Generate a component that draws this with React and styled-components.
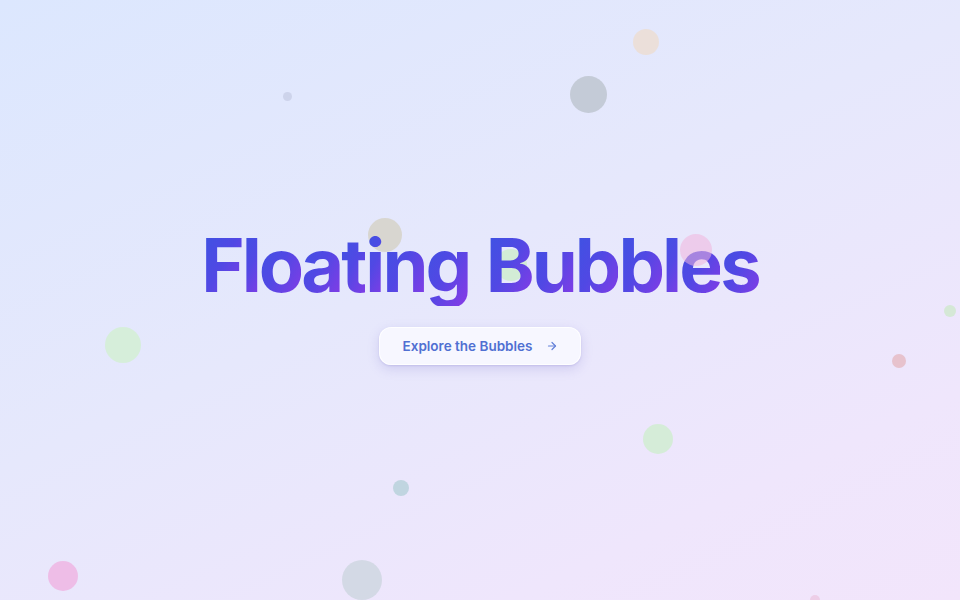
import React from "react";
import styled, { createGlobalStyle } from "styled-components";

const GlobalStyle = createGlobalStyle`
  html, body {
    margin: 0;
    padding: 0;
  }
  body {
    font-family: Inter, "Noto Sans", "Liberation Sans", sans-serif;
    -webkit-font-smoothing: antialiased;
  }
`;

const Stage = styled.main`
  position: relative;
  width: 100vw;
  height: 100vh;
  min-height: 600px;
  overflow: hidden;
  background: linear-gradient(155deg, #dce7fe 0%, #e6e8fc 45%, #efe6fc 80%, #f2e5fb 100%);
`;

const Hero = styled.section`
  position: relative;
  z-index: 2;
  height: 100%;
  box-sizing: border-box;
  padding-bottom: 12px;
  display: flex;
  flex-direction: column;
  align-items: center;
  justify-content: center;
  gap: 21px;
`;

const Title = styled.h1`
  margin: 0;
  font-size: 74px;
  line-height: 82px;
  font-weight: 700;
  letter-spacing: -0.04em;
  white-space: nowrap;
`;

const Letter = styled.span`
  display: inline-block;
  background: linear-gradient(120deg, #3a55e2 0%, #5148e4 50%, #8a3ae6 100%);
  -webkit-background-clip: text;
  background-clip: text;
  color: transparent;
`;

const Space = styled.span`
  display: inline-block;
  width: 0.22em;
`;

const ExploreButton = styled.button`
  display: flex;
  align-items: center;
  gap: 14px;
  height: 38px;
  padding: 0 22px 0 23px;
  border-radius: 12px;
  border: 1px solid rgba(255, 255, 255, 0.9);
  background: rgba(249, 249, 255, 0.85);
  box-shadow: 0 4px 12px rgba(120, 110, 200, 0.22), 0 1px 2px rgba(120, 110, 200, 0.2);
  font-family: Inter, "Noto Sans", sans-serif;
  font-size: 13.5px;
  font-weight: 600;
  color: #5070d2;
  cursor: pointer;
`;

const Arrow = styled.svg`
  width: 12px;
  height: 12px;
  color: #6380d8;
`;

const Bubble = styled.span`
  position: absolute;
  z-index: ${({ $front }) => ($front ? 3 : 1)};
  border-radius: 50%;
  background: ${({ $color }) => $color};
  filter: blur(0.6px);
`;

const bubbles = [
  { x: 646, y: 42, d: 26, color: "rgba(238, 220, 205, 0.75)" },
  { x: 588, y: 94, d: 37, color: "rgba(190, 198, 208, 0.85)" },
  { x: 287, y: 96, d: 9, color: "rgba(200, 206, 230, 0.8)" },
  { x: 385, y: 235, d: 34, color: "rgba(214, 210, 200, 0.85)" },
  { x: 511, y: 265, d: 32, color: "rgba(210, 236, 212, 0.95)" },
  { x: 696, y: 250, d: 32, color: "rgba(240, 180, 220, 0.55)", front: true },
  { x: 123, y: 345, d: 36, color: "rgba(212, 238, 214, 0.9)" },
  { x: 950, y: 311, d: 12, color: "rgba(210, 232, 210, 0.9)" },
  { x: 899, y: 361, d: 14, color: "rgba(230, 190, 200, 0.9)" },
  { x: 658, y: 439, d: 30, color: "rgba(212, 236, 214, 0.95)" },
  { x: 401, y: 488, d: 16, color: "rgba(190, 212, 222, 0.95)" },
  { x: 63, y: 576, d: 30, color: "rgba(238, 186, 230, 0.95)" },
  { x: 362, y: 580, d: 40, color: "rgba(210, 216, 228, 0.95)" },
  { x: 815, y: 600, d: 10, color: "rgba(236, 200, 226, 0.8)" },
];

const Word = ({ text }) =>
  text.split("").map((ch, i) => <Letter key={i}>{ch}</Letter>);

export default function App() {
  return (
    <>
      <GlobalStyle />
      <Stage>
        {bubbles.map((b, i) => (
          <Bubble
            key={i}
            $color={b.color}
            $front={b.front}
            style={{ left: b.x - b.d / 2, top: b.y - b.d / 2, width: b.d, height: b.d }}
          />
        ))}
        <Hero>
          <Title>
            <Word text="Floating" />
            <Space />
            <Word text="Bubbles" />
          </Title>
          <ExploreButton>
            Explore the Bubbles
            <Arrow viewBox="0 0 24 24" fill="none" stroke="currentColor" strokeWidth="2.4" strokeLinecap="round" strokeLinejoin="round">
              <path d="M5 12h14" />
              <path d="m12 5 7 7-7 7" />
            </Arrow>
          </ExploreButton>
        </Hero>
      </Stage>
    </>
  );
}
